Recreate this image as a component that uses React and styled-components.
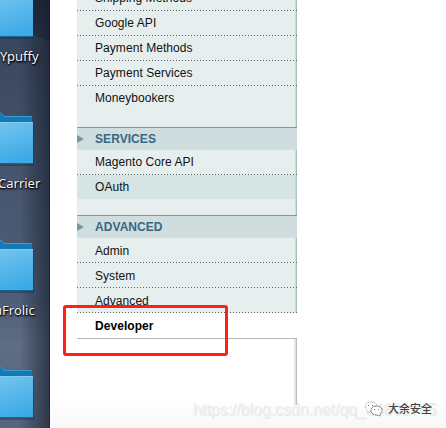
import React from 'react';
import styled, { createGlobalStyle } from 'styled-components';

const Global = createGlobalStyle`
  * { box-sizing: border-box; }
  body { margin: 0; background: #fff; overflow: hidden; }
`;

const Screen = styled.div`
  position: relative;
  display: flex;
  width: 446px;
  height: 428px;
  overflow: hidden;
  background: linear-gradient(#fff 0, #fff 398px, #f7f7f7 428px);
`;

const Desktop = styled.div`
  width: 50px;
  flex: none;
  overflow: hidden;
  background:
    linear-gradient(90deg, rgba(20, 28, 42, 0) 20px, rgba(20, 28, 42, 0.62) 49px, #101b26 50px),
    linear-gradient(202deg, #1f2a3e 0, #28344a 38px, transparent 39px),
    linear-gradient(180deg, #35425a 0, #3b485f 60px, #46546e 170px, #4f5e78 300px, #5e6c84 345px, #56647c 428px);
`;

const IconColumn = styled.div`
  display: flex;
  flex-direction: column;
  margin-top: -15px;
`;

const DesktopItem = styled.div`
  height: 127px;
  flex: none;
`;

const FolderArt = styled.svg`
  display: block;
  width: 50px;
  height: 58px;
`;

const ItemLabel = styled.div`
  margin-left: ${(p) => p.$left}px;
  padding-top: 3px;
  font: 13px/20px 'Noto Sans', sans-serif;
  color: #f4f4f4;
  white-space: nowrap;
  text-shadow: 1px 1px 2px #000, 0 1px 2px #000;
`;

const Sidebar = styled.nav`
  width: 220px;
  height: 405px;
  flex: none;
  margin-left: 27px;
  overflow: hidden;
  font: 12px/15px 'Liberation Sans', Arial, sans-serif;
  letter-spacing: 0.06px;
  color: #111;
`;

const Group = styled.section`
  height: ${(p) => p.$height}px;
  background:
    linear-gradient(90deg, #cbdeda 0 1px, #a5bfba 1px 2px) right / 2px 100% no-repeat,
    #e7efee;
`;

const GroupTitle = styled.h3`
  display: flex;
  align-items: center;
  height: 23px;
  margin: 0;
  border-top: 1px solid #7b989f;
  background: #d0dddf;
  color: #356984;
  font-size: 12px;
  line-height: 15px;
`;

const Arrow = styled.svg`
  width: 7px;
  height: 8px;
  margin-right: 11px;
`;

const dots = 'repeating-linear-gradient(90deg, #59686a 0 1px, transparent 1px 3px) bottom / 100% 1px no-repeat';

const Row = styled.div`
  display: flex;
  align-items: flex-start;
  height: ${(p) => p.$height || 25}px;
  padding: ${(p) => p.$top ?? 5}px 0 0 18px;
  background: ${(p) => (p.$divided ? dots : 'none')};
  background-color: ${(p) => (p.$shaded ? 'rgba(190, 215, 211, 0.4)' : 'transparent')};
`;

const ScrolledRow = styled(Row)`
  align-items: flex-end;
  padding-bottom: 5px;
`;

const CurrentRow = styled.div`
  height: 26px;
  padding: 6px 0 0 18px;
  border-bottom: 1px solid #b8b8b8;
  background: #fff;
  color: #000;
  font-weight: bold;
`;

const SidebarTail = styled.div`
  height: 66px;
  background: linear-gradient(90deg, #e9e9e9 0 1px, #e1e1e1 1px 2px, #bdbdbd 2px 3px) right / 3px 100% no-repeat;
`;

const Highlight = styled.div`
  position: absolute;
  left: 63px;
  top: 305px;
  width: 165px;
  height: 51px;
  border: 3px solid #ff1f14;
  border-radius: 3px;
`;

const Watermark = styled.div`
  position: absolute;
  left: 193px;
  top: 400px;
  font: 16px/20px 'Liberation Sans', Arial, sans-serif;
  letter-spacing: -0.06px;
  color: #efefef;
  text-shadow: 1px 1px 1px #e6e6e6;
  white-space: nowrap;
`;

const Author = styled.div`
  position: absolute;
  left: 364px;
  top: 400px;
  display: flex;
  align-items: center;
  gap: 5px;
  font: 500 11px/17px 'Noto Sans CJK SC', sans-serif;
  color: #444;
  white-space: nowrap;
  text-shadow: 0 0 1px #fff;
`;

function Folder({ id }) {
  return (
    <FolderArt viewBox="0 0 50 58">
      <defs>
        <linearGradient id={id} x1="0" y1="0" x2="0.25" y2="1">
          <stop offset="0" stopColor="#72c5ef" />
          <stop offset="1" stopColor="#3daae6" />
        </linearGradient>
      </defs>
      <path d="M0 11H34V54H0Z" fill="#172438" opacity=".35" />
      <path d="M0 0.5L4 4H32V12H0Z" fill="#1479b5" />
      <path d="M0 0.5L4 4.5H32" fill="none" stroke="#3c9dcd" />
      <path d="M0 10H33V52H0Z" fill={`url(#${id})`} />
      <path d="M0 10.5H33" stroke="#83ccef" />
      <path d="M0 51.5H33" stroke="#17669a" />
    </FolderArt>
  );
}

function Title({ children }) {
  return (
    <GroupTitle>
      <Arrow viewBox="0 0 7 8"><path d="M0 0L7 4L0 8Z" fill="#7399a5" /></Arrow>
      {children}
    </GroupTitle>
  );
}

const items = [
  { id: 'f1', label: 'Ypuffy', left: 0 },
  { id: 'f2', label: 'Carrier', left: -2 },
  { id: 'f3', label: 'uFrolic', left: -6 },
  { id: 'f4', label: '', left: 0 },
];

export default function App() {
  return (
    <Screen>
      <Global />
      <Desktop>
        <IconColumn>
          {items.map((i) => (
            <DesktopItem key={i.id}>
              <Folder id={i.id} />
              <ItemLabel $left={i.left}>{i.label}</ItemLabel>
            </DesktopItem>
          ))}
        </IconColumn>
      </Desktop>
      <Sidebar>
        <Group $height={127}>
          <ScrolledRow $height={11} $top={0} $divided>Shipping Methods</ScrolledRow>
          <Row $divided>Google API</Row>
          <Row $divided>Payment Methods</Row>
          <Row $divided>Payment Services</Row>
          <Row>Moneybookers</Row>
        </Group>
        <Group $height={88}>
          <Title>SERVICES</Title>
          <Row $divided>Magento Core API</Row>
          <Row $height={24} $shaded>OAuth</Row>
        </Group>
        <Group $height={98}>
          <Title>ADVANCED</Title>
          <Row $divided $top={6}>Admin</Row>
          <Row $divided $top={6}>System</Row>
          <Row $divided $top={6}>Advanced</Row>
        </Group>
        <CurrentRow>Developer</CurrentRow>
        <SidebarTail />
      </Sidebar>
      <Highlight />
      <Watermark>https://blog.csdn.net/qq_34801745</Watermark>
      <Author>
        <svg width="19" height="16" viewBox="0 0 19 16" fill="none" stroke="#777" strokeWidth="1">
          <path d="M7 11L4 12L4 10C-1 7 1 1 7 1C11 1 13 3 13 5" fill="#fcfcfc" stroke="#bbb" strokeDasharray="2 1" />
          <path d="M12.5 5C5 5 5 14 12.5 14L16 15L16 13C20 10 18 5 12.5 5Z" fill="#fcfcfc" strokeDasharray="3 .6" />
          <path d="M10 8.5H11M14 8.5H15M4 4.5H5M8 4.5H9" />
        </svg>
        大余安全
      </Author>
    </Screen>
  );
}
